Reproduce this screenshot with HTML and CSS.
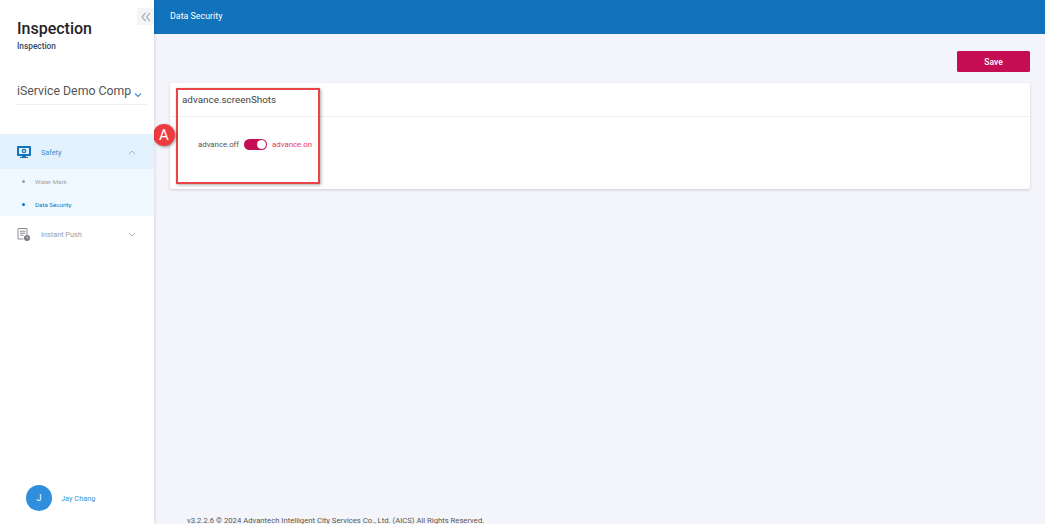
FILE: index.html
```html
<!DOCTYPE html>
<html lang="en">
<head>
<meta charset="utf-8">
<title>Data Security</title>
<link rel="stylesheet" href="styles.css">
</head>
<body>
<div class="app">
  <aside class="sidebar">
    <button class="collapse" aria-label="Collapse">
      <svg viewBox="0 0 10 10" width="10" height="10"><path d="M4.5 1 L1 5 L4.5 9 M9 1 L5.5 5 L9 9" fill="none" stroke="#a9b0b9" stroke-width="1.2"/></svg>
    </button>
    <div class="brand">
      <h1 class="brand-title">Inspection</h1>
      <div class="brand-sub">Inspection</div>
    </div>
    <div class="company">
      <span class="company-name">iService Demo Comp</span>
      <svg class="company-caret" viewBox="0 0 8 6" width="8" height="6"><path d="M1 1.5 L4 4.5 L7 1.5" fill="none" stroke="#3d8fd1" stroke-width="1.1"/></svg>
    </div>
    <nav class="nav">
      <div class="nav-group open">
        <div class="nav-item active">
          <svg class="nav-icon" viewBox="0 0 14 12" width="14" height="12"><path fill="#1273bd" fill-rule="evenodd" d="M1 0h12a1 1 0 0 1 1 1v8a1 1 0 0 1-1 1H9v1h2v1H3v-1h2v-1H1a1 1 0 0 1-1-1V1a1 1 0 0 1 1-1zM2 2v6h10V2z"/><circle cx="7" cy="5" r="2.300" fill="#1273bd"/><circle cx="7" cy="5" r=".9" fill="#e2f1fc"/></svg>
          <span class="nav-label">Safety</span>
          <svg class="nav-caret" viewBox="0 0 8 5" width="8" height="5"><path d="M1 4 L4 1 L7 4" fill="none" stroke="#a7b0b8" stroke-width=".9"/></svg>
        </div>
        <div class="sub-list">
          <div class="sub-item"><span class="dot"></span>Water Mark</div>
          <div class="sub-item current"><span class="dot"></span>Data Security</div>
        </div>
      </div>
      <div class="nav-item">
        <svg class="nav-icon" viewBox="0 0 13 13" width="13" height="13"><path d="M1 .5h9v7M1 .5v10.500h5.500" fill="none" stroke="#8b8f93" stroke-width="1"/><path d="M3 3.200h5.500M3 5.200h5.500M3 7.200h3.500" stroke="#8b8f93" stroke-width="1"/><circle cx="10" cy="10" r="3" fill="#777b80"/><path d="M10 8.500V10h1.300" fill="none" stroke="#fff" stroke-width=".7"/></svg>
        <span class="nav-label">Instant Push</span>
        <svg class="nav-caret" viewBox="0 0 8 5" width="8" height="5"><path d="M1 1 L4 4 L7 1" fill="none" stroke="#a7b0b8" stroke-width=".9"/></svg>
      </div>
    </nav>
    <div class="user">
      <span class="avatar">J</span>
      <span class="user-name">Jay Chang</span>
    </div>
  </aside>
  <div class="main">
    <header class="topbar">Data Security</header>
    <main class="content">
      <div class="actions"><button class="save">Save</button></div>
      <section class="card">
        <h2 class="card-title">advance.screenShots</h2>
        <div class="card-body">
          <span class="off">advance.off</span>
          <span class="switch"><span class="knob"></span></span>
          <span class="on">advance.on</span>
        </div>
        <div class="callout"></div>
        <div class="marker">A</div>
      </section>
    </main>
    <footer class="footer">v3.2.2.6 © 2024 Advantech Intelligent City Services Co., Ltd. (AICS) All Rights Reserved.</footer>
  </div>
</div>
</body>
</html>
```
FILE: styles.css
```css
* { box-sizing: border-box; }
html, body { margin: 0; height: 100%; }
body { font-family: Roboto, "Liberation Sans", sans-serif; color: #333; overflow: hidden; }
.app { display: flex; width: 1045px; height: 524px; background: #f4f5fa; }

.sidebar {
  position: relative;
  width: 154px;
  flex: none;
  display: flex;
  flex-direction: column;
  background: #fff;
  box-shadow: 1px 0 3px rgba(0,0,0,.1);
  z-index: 2;
}
.collapse {
  position: absolute;
  top: 8px;
  left: 137px;
  width: 17px;
  height: 17px;
  padding: 0;
  border: 0;
  background: #f3f4f6;
  display: flex;
  align-items: center;
  justify-content: center;
}
.brand { padding: 19px 0 0 17px; }
.brand-title { margin: 0; font-size: 16px; line-height: 20px; font-weight: 500; color: #1f2226; }
.brand-sub { margin-top: 1px; font-size: 8.300px; line-height: 12px; font-weight: 500; color: #34495e; }
.company {
  margin: 31px 0 0 17px;
  width: 130px;
  height: 22px;
  border-bottom: 1px solid #eceef0;
  display: flex;
  align-items: flex-start;
  white-space: nowrap;
}
.company-name { font-size: 12.300px; line-height: 16px; color: #555; }
.company-caret { margin: 9px 0 0 3px; flex: none; }

.nav { margin-top: 29px; }
.nav-group.open { background: #eff8fe; }
.nav-item {
  height: 35px;
  display: flex;
  align-items: center;
  padding: 1px 18px 0 17px;
  font-size: 7.300px;
  color: #9a9ea3;
}
.nav-item.active { background: #e2f1fc; color: #3d8fd1; }
.nav-icon { flex: none; }
.nav-label { margin-left: 10px; flex: 1; }
.nav-item:not(.active) .nav-label { margin-left: 11px; }
.nav-caret { flex: none; }
.sub-list { height: 47px; padding-top: 1px; }
.sub-item {
  height: 23px;
  display: flex;
  align-items: center;
  padding-left: 22px;
  font-size: 6.200px;
  color: #a2a5a8;
}
.sub-item.current { color: #1273bd; }
.dot { width: 3px; height: 3px; border-radius: 50%; background: #9a9ea3; margin-right: 10px; }
.current .dot { background: #1273bd; }

.user { margin-top: auto; padding: 0 0 13px 26px; display: flex; align-items: center; }
.avatar {
  width: 26px;
  height: 26px;
  border-radius: 50%;
  background: #2f8fdc;
  color: #fff;
  font-size: 9px;
  display: flex;
  align-items: center;
  justify-content: center;
}
.user-name { margin-left: 9px; font-size: 7.400px; color: #3d8fd1; }

.main { flex: 1; min-width: 0; display: flex; flex-direction: column; }
.topbar {
  height: 34px;
  flex: none;
  background: #1273bd;
  color: #fff;
  font-size: 8.900px;
  line-height: 33px;
  padding-left: 16px;
}
.content { flex: 1; padding: 17px 15px 0 16px; }
.actions { display: flex; justify-content: flex-end; }
.save {
  width: 73px;
  height: 21px;
  padding: 0;
  border: 0;
  border-radius: 1.500px;
  background: #c50d54;
  color: #fff;
  font: 500 8.500px Roboto, sans-serif;
}
.card {
  position: relative;
  margin-top: 11px;
  height: 106px;
  background: #fff;
  border-radius: 3px;
  box-shadow: 0 1px 3px rgba(0,0,0,.16);
}
.card-title {
  margin: 0;
  height: 34px;
  padding: 10px 0 0 12px;
  font-size: 9.900px;
  line-height: 14px;
  font-weight: 400;
  color: #444;
  border-bottom: 1px solid #eef0f2;
}
.card-body { display: flex; align-items: center; padding: 22px 0 0 28px; font-size: 7.800px; }
.off { color: #555; }
.on { color: #e8335f; }
.switch {
  position: relative;
  width: 23px;
  height: 11px;
  margin: 0 5px;
  border-radius: 6px;
  background: #c50d54;
}
.knob {
  position: absolute;
  top: 1px;
  right: 1px;
  width: 9px;
  height: 9px;
  border-radius: 50%;
  background: #fff;
}
.callout {
  position: absolute;
  left: 6px;
  top: 5px;
  width: 144px;
  height: 96px;
  border: 2px solid #e64545;
  box-shadow: 1px 1px 3px rgba(0,0,0,.35);
}
.marker {
  position: absolute;
  left: -17px;
  top: 41px;
  width: 22px;
  height: 22px;
  border-radius: 50%;
  background: #ee3b3f;
  color: #fff;
  font-size: 15px;
  line-height: 22px;
  text-align: center;
  box-shadow: 1px 1px 3px rgba(0,0,0,.4);
}
.footer {
  height: 9px;
  flex: none;
  margin-left: 33px;
  font-size: 7.700px;
  line-height: 11px;
  color: #555;
  white-space: nowrap;
}
```
